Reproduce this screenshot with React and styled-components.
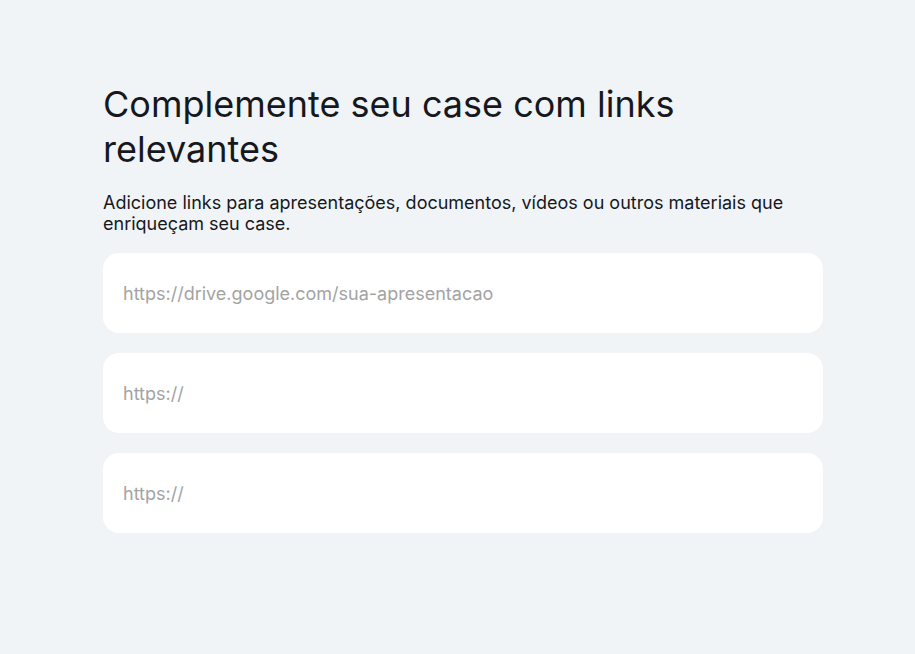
import React from "react";
import styled, { createGlobalStyle } from "styled-components";

const GlobalStyle = createGlobalStyle`
  body {
    margin: 0;
    background: #f0f4f7;
    font-family: Inter, "Noto Sans", sans-serif;
    color: #16181d;
  }
`;

const Page = styled.div`
  min-height: 654px;
  padding: 82px 92px 40px 103px;
  box-sizing: border-box;
`;

const Content = styled.div`
  width: 720px;
  display: flex;
  flex-direction: column;
`;

const Title = styled.h1`
  margin: 0 0 20px;
  font-size: 36px;
  line-height: 45px;
  font-weight: 400;
`;

const Subtitle = styled.p`
  margin: 0 0 19px;
  font-size: 18px;
  line-height: 21px;
  font-weight: 400;
`;

const Fields = styled.div`
  display: flex;
  flex-direction: column;
  gap: 20px;
`;

const LinkInput = styled.input`
  height: 80px;
  box-sizing: border-box;
  border: none;
  outline: none;
  border-radius: 16px;
  background: #ffffff;
  padding: 0 20px;
  font-family: Inter, "Noto Sans", sans-serif;
  font-size: 18px;
  color: #16181d;

  &::placeholder {
    color: #a3a3a3;
  }
`;

const placeholders = [
  "https://drive.google.com/sua-apresentacao",
  "https://",
  "https://",
];

export default function App() {
  return (
    <>
      <GlobalStyle />
      <Page>
        <Content>
          <Title>Complemente seu case com links relevantes</Title>
          <Subtitle>
            Adicione links para apresentações, documentos, vídeos ou outros
            materiais que enriqueçam seu case.
          </Subtitle>
          <Fields>
            {placeholders.map((p, i) => (
              <LinkInput key={i} type="url" placeholder={p} />
            ))}
          </Fields>
        </Content>
      </Page>
    </>
  );
}
